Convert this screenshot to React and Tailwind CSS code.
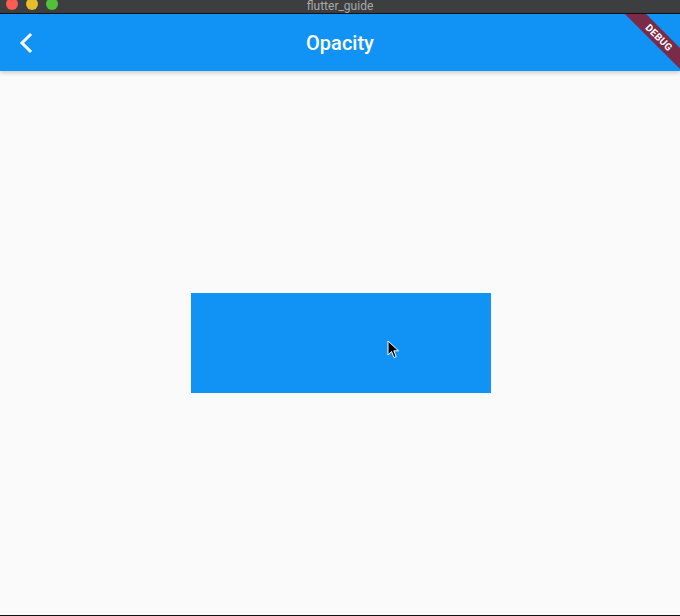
import React from 'react';

const Cursor = () => (
  <svg width="14" height="20" viewBox="0 0 14 20" className="absolute left-[387px] top-[340px]">
    <path d="M1 1 L1 15 L4.5 11.5 L7 17.5 L9.2 16.6 L6.8 10.8 L11.5 10.8 Z" fill="#000" stroke="#fff" strokeWidth="1" strokeLinejoin="round" />
  </svg>
);

const App = () => {
  return (
    <div className="relative w-[680px] h-[616px] overflow-hidden bg-[#fafafa] flex flex-col" style={{ fontFamily: 'Roboto, "Liberation Sans", sans-serif' }}>
      {/* mac window title bar */}
      <div className="relative h-[14px] bg-[#3d3e40] border-b border-[#121212] flex items-center justify-center shrink-0">
        <div className="absolute left-[6px] top-[-2px] flex gap-[8px]">
          <div className="w-[12px] h-[12px] rounded-full bg-[#fd5b54]" />
          <div className="w-[12px] h-[12px] rounded-full bg-[#e8bd2c]" />
          <div className="w-[12px] h-[12px] rounded-full bg-[#52c13a]" />
        </div>
        <span className="text-[12px] leading-[12px] text-[#a9a9a9] mt-[-1px]">flutter_guide</span>
      </div>

      {/* app bar */}
      <div className="relative h-[57px] bg-[#1193f5] flex items-center justify-center shrink-0 shadow-[0_2px_4px_rgba(0,0,0,0.18)] z-10 overflow-hidden">
        <svg width="14" height="22" viewBox="0 0 14 22" className="absolute left-[19px] top-[18px]">
          <path d="M11 3 L3 11 L11 19" fill="none" stroke="#fff" strokeWidth="3" strokeLinecap="square" />
        </svg>
        <span className="text-white text-[20px] font-medium">Opacity</span>
        <div className="absolute right-[-34px] top-[16px] w-[110px] h-[15px] bg-[#7a2b48] rotate-45 origin-center flex items-center justify-center">
          <span className="text-white text-[10px] font-bold tracking-[0.3px] leading-none">DEBUG</span>
        </div>
      </div>

      {/* body */}
      <div className="flex-1 flex items-center justify-center">
        <div className="w-[300px] h-[100px] bg-[#1193f5] ml-[2px]" />
      </div>
      <div className="h-[1px] bg-[#111] shrink-0" />
      <Cursor />
    </div>
  );
};

export default App;
